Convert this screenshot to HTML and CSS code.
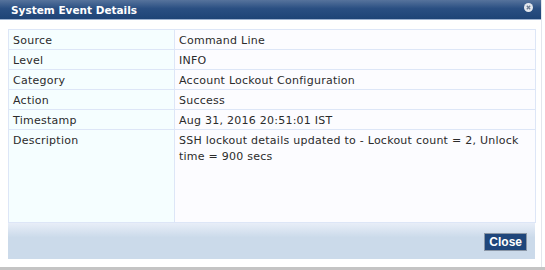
FILE: index.html
```html
<!DOCTYPE html>
<html lang="en">
<head>
    <meta charset="UTF-8">
    <title>System Event Details</title>
    <link rel="stylesheet" href="styles.css">
</head>
<body>
    <div class="dialog">
        <div class="titlebar">
            <span class="title">System Event Details</span>
            <span class="close-icon">
                <svg width="9" height="9" viewBox="0 0 9 9">
                    <circle cx="4.5" cy="4.5" r="4.5" fill="#e4e8ee"/>
                    <path d="M2.8 2.8 L6.2 6.2 M6.2 2.8 L2.8 6.2" stroke="#6b7a90" stroke-width="1.3"/>
                </svg>
            </span>
        </div>
        <div class="content">
            <table class="details">
                <tr><td class="label">Source</td><td class="value">Command Line</td></tr>
                <tr><td class="label">Level</td><td class="value">INFO</td></tr>
                <tr><td class="label">Category</td><td class="value">Account Lockout Configuration</td></tr>
                <tr><td class="label">Action</td><td class="value">Success</td></tr>
                <tr><td class="label">Timestamp</td><td class="value">Aug 31, 2016 20:51:01 IST</td></tr>
                <tr class="desc"><td class="label">Description</td><td class="value">SSH lockout details updated to - Lockout count = 2, Unlock time = 900 secs</td></tr>
            </table>
            <div class="footer">
                <button class="btn">Close</button>
            </div>
        </div>
    </div>
    <div class="bottom-bar"></div>
</body>
</html>
```

FILE: styles.css
```css
body {
    margin: 0;
    background-color: #ffffff;
    font-family: "DejaVu Sans", Verdana, sans-serif;
    font-size: 11px;
    color: #2b2b2b;
}

.dialog {
    width: 542px;
    height: 267px;
    border-right: 1px solid #e2e6ec;
    box-sizing: border-box;
    background-color: #ffffff;
}

/* barre de titre */
.titlebar {
    height: 19px;
    background: linear-gradient(#56739c, #2a4f82 45%, #1e4476);
    border-bottom: 1px solid #9fb3d0;
    display: flex;
    align-items: center;
    justify-content: space-between;
    padding: 0 8px 0 11px;
}

.title {
    color: #ffffff;
    font-weight: bold;
    font-size: 10.5px;
}

.close-icon {
    display: flex;
    margin-top: -4px;
}

.content {
    padding: 9px 6px 0 8px;
}

/* tableau des details */
.details {
    width: 528px;
    border-collapse: collapse;
    border: 1px solid #dde6f7;
}

.details td {
    border: 1px solid #dde6f7;
    height: 18px;
    padding: 1px 4px 0 4px;
    vertical-align: middle;
    letter-spacing: 0.25px;
}

.details .label {
    width: 157px;
    background-color: #f5feff;
}

.details .value {
    background-color: #fcfcff;
}

.details .desc td {
    height: 89px;
    vertical-align: top;
    padding-top: 3px;
    line-height: 16px;
}

.footer {
    height: 36px;
    background: linear-gradient(#e8eef8, #cbdaea 40%, #cbdaea);
    display: flex;
    justify-content: flex-end;
    align-items: center;
    padding-right: 8px;
}

.btn {
    background-color: #1f467b;
    color: #ffffff;
    font-family: "Liberation Sans", Arial, sans-serif;
    font-weight: bold;
    font-size: 12px;
    border: 1px solid #8a96a6;
    padding: 0 4px;
    height: 18px;
    margin-top: 1px;
}

.bottom-bar {
    height: 3px;
    background-color: #c4c4c4;
}
```
